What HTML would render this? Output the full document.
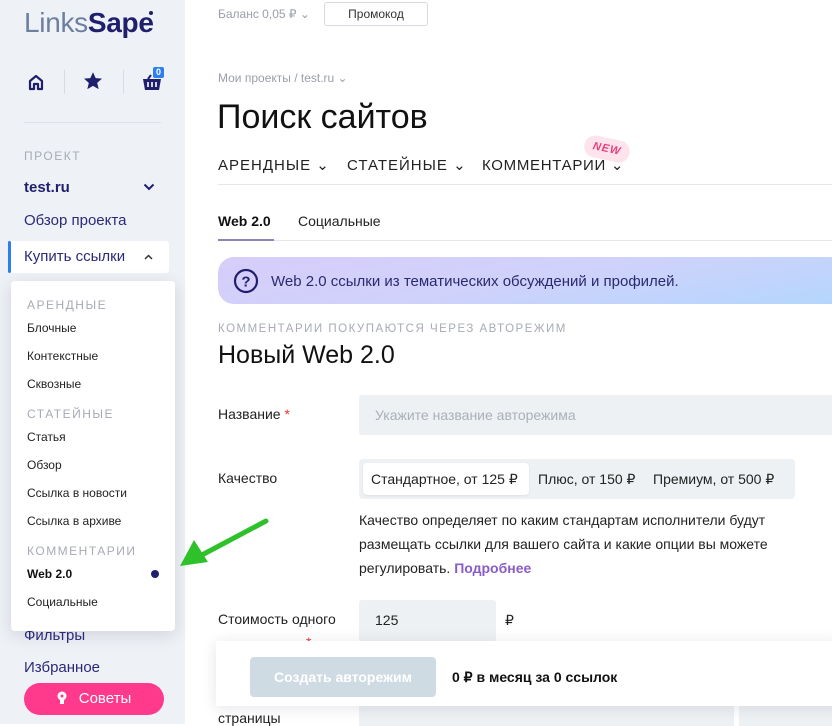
<!DOCTYPE html>
<html><head><meta charset="utf-8"><style>
*{box-sizing:border-box;margin:0;padding:0}
body{width:832px;height:724px;overflow:hidden;background:#fff;font-family:"Liberation Sans","Noto Sans CJK JP",sans-serif;position:relative;color:#111}
.a{position:absolute;white-space:nowrap}
#side{position:absolute;left:0;top:0;width:185px;height:724px;background:#eef1f5}
.nav{color:#2b2a7a;font-size:15px}
.cap{color:#a6abb5;font-size:12px;letter-spacing:1.5px}
.dd{position:absolute;left:11px;top:281px;width:164px;height:350px;background:#fff;border-radius:4px;box-shadow:0 4px 16px rgba(40,50,90,.15)}
.dd .cap{left:16px}
.dd .it{position:absolute;left:16px;font-size:12px;color:#222}
</style></head><body>
<div id="side">
 <div class="a" style="left:24px;top:7px;font-size:28px;letter-spacing:-.3px"><span style="color:#6d7fa0">Links</span><span style="color:#1f1f6e;font-weight:bold">Sape</span></div>
 <div class="a" style="left:149px;top:11px;width:4px;height:4px;border-radius:50%;background:#1f1f6e"></div>
 <svg class="a" style="left:27px;top:73px" width="18" height="18" viewBox="0 0 18 18"><path d="M3 16V8l6-5 6 5v8h-4v-5H7v5z" fill="none" stroke="#1f1f6e" stroke-width="2.2" stroke-linejoin="round"/></svg>
 <div class="a" style="left:64px;top:70px;width:1px;height:24px;background:#d7dce3"></div>
 <svg class="a" style="left:83px;top:71px" width="20" height="20" viewBox="0 0 24 24"><path d="M12 1.5l3.2 7 7.6.7-5.8 5 1.8 7.5L12 17.8 5.2 21.7 7 14.2l-5.8-5 7.6-.7z" fill="#1f1f6e"/></svg>
 <div class="a" style="left:123px;top:70px;width:1px;height:24px;background:#d7dce3"></div>
 <svg class="a" style="left:142px;top:74px" width="20" height="17" viewBox="0 0 20 17"><path d="M1 5h18l-2 11H3z" fill="#1f1f6e"/><path d="M6 8v5M10 8v5M14 8v5" stroke="#fff" stroke-width="1.6"/><path d="M6 5l3-4" stroke="#1f1f6e" stroke-width="2"/></svg>
 <div class="a" style="left:153px;top:67px;width:11px;height:11px;background:#2d7ff0;border-radius:2px;color:#fff;font-size:9px;font-weight:bold;text-align:center;line-height:11px">0</div>
 <div class="a" style="left:24px;top:122px;width:137px;height:1px;background:#dde1e7"></div>
 <div class="a cap" style="left:24px;top:149px">ПРОЕКТ</div>
 <div class="a" style="left:24px;top:179px;font-size:15px;font-weight:bold;color:#1f1f6e">test.ru</div>
 <svg class="a" style="left:143px;top:183px" width="12" height="8" viewBox="0 0 12 8"><path d="M1.5 1.5l4.5 4.5 4.5-4.5" fill="none" stroke="#1f1f6e" stroke-width="2"/></svg>
 <div class="a nav" style="left:24px;top:212px">Обзор проекта</div>
 <div class="a" style="left:8px;top:241px;width:161px;height:32px;background:#fff;border-radius:3px"></div>
 <div class="a" style="left:8px;top:241px;width:3px;height:32px;background:#2d7ff0;border-radius:2px"></div>
 <div class="a nav" style="left:24px;top:248px">Купить ссылки</div>
 <svg class="a" style="left:144px;top:254px" width="9" height="6" viewBox="0 0 9 6"><path d="M1 5l3.5-3.5L8 5" fill="none" stroke="#333" stroke-width="1.5"/></svg>
 <div class="a nav" style="left:24px;top:627px">Фильтры</div>
 <div class="a nav" style="left:24px;top:659px">Избранное</div>
 <div class="a" style="left:24px;top:683px;width:140px;height:32px;border-radius:16px;background:#ff3a8c;color:#fff;font-size:15px;text-align:center;line-height:32px">
  <svg style="vertical-align:-2px;margin-right:12px" width="10" height="14" viewBox="0 0 10 14"><circle cx="5" cy="5" r="4.5" fill="#fff"/><rect x="3" y="9" width="4" height="4" fill="#fff"/><circle cx="5" cy="5" r="1.5" fill="#ff3a8c"/></svg>Советы</div>
</div>
<div class="dd">
 <div class="a cap" style="top:17px">АРЕНДНЫЕ</div>
 <div class="it" style="top:40px">Блочные</div>
 <div class="it" style="top:68px">Контекстные</div>
 <div class="it" style="top:96px">Сквозные</div>
 <div class="a cap" style="top:126px">СТАТЕЙНЫЕ</div>
 <div class="it" style="top:149px">Статья</div>
 <div class="it" style="top:177px">Обзор</div>
 <div class="it" style="top:205px">Ссылка в новости</div>
 <div class="it" style="top:233px">Ссылка в архиве</div>
 <div class="a cap" style="top:263px">КОММЕНТАРИИ</div>
 <div class="it" style="top:286px;font-weight:bold;color:#111">Web 2.0</div>
 <div class="a" style="left:140px;top:289px;width:8px;height:8px;border-radius:50%;background:#1f1f6e"></div>
 <div class="it" style="top:314px">Социальные</div>
</div>
<svg class="a" style="left:178px;top:518px" width="92" height="52" viewBox="0 0 92 52"><path d="M88 3L22 38" stroke="#2fc12a" stroke-width="5" stroke-linecap="round"/><path d="M2 48L16 22 30 44z" fill="#2fc12a"/></svg>

<div class="a" style="left:218px;top:7px;font-size:12px;color:#9aa0a8">Баланс 0,05 ₽ ⌄</div>
<div class="a" style="left:324px;top:2px;width:104px;height:24px;border:1px solid #d6d9de;border-radius:3px;font-size:12px;color:#333;text-align:center;line-height:22px">Промокод</div>
<div class="a" style="left:218px;top:71px;font-size:12px;color:#9aa0a8">Мои проекты / test.ru ⌄</div>
<div class="a" style="left:217px;top:98px;font-size:34px;color:#111">Поиск сайтов</div>
<div class="a" style="left:218px;top:156px;font-size:15px;letter-spacing:1px;color:#222">АРЕНДНЫЕ ⌄</div>
<div class="a" style="left:347px;top:156px;font-size:15px;letter-spacing:1px;color:#222">СТАТЕЙНЫЕ ⌄</div>
<div class="a" style="left:482px;top:156px;font-size:15px;letter-spacing:.7px;color:#222">КОММЕНТАРИИ ⌄</div>
<div class="a" style="left:584px;top:138px;width:46px;height:22px;border-radius:11px;background:#fde3ec;transform:rotate(12deg);color:#ea3d7e;font-size:11px;font-weight:bold;font-style:italic;text-align:center;line-height:22px;letter-spacing:1px">NEW</div>
<div class="a" style="left:218px;top:184px;width:614px;height:1px;background:#e4e6ea"></div>
<div class="a" style="left:218px;top:213px;font-size:14px;font-weight:bold">Web 2.0</div>
<div class="a" style="left:298px;top:213px;font-size:14px;color:#222">Социальные</div>
<div class="a" style="left:218px;top:240px;width:614px;height:1px;background:#e4e6ea"></div>
<div class="a" style="left:218px;top:239px;width:56px;height:2px;background:#8a86b5"></div>
<div class="a" style="left:218px;top:257px;width:620px;height:47px;border-radius:16px 0 0 16px;background:linear-gradient(170deg,#d8cdfa 0%,#cfd2fb 50%,#b4d6fc 100%)"></div>
<svg class="a" style="left:233px;top:268px" width="26" height="26" viewBox="0 0 26 26"><circle cx="13" cy="13" r="11" fill="none" stroke="#1f1f6e" stroke-width="2.2"/><text x="13" y="18.5" text-anchor="middle" font-size="15" font-weight="bold" fill="#1f1f6e" font-family="Liberation Sans">?</text></svg>
<div class="a" style="left:271px;top:273px;font-size:15px;color:#2b2a6e">Web 2.0 ссылки из тематических обсуждений и профилей.</div>
<div class="a cap" style="left:218px;top:323px;font-size:11.5px">КОММЕНТАРИИ ПОКУПАЮТСЯ ЧЕРЕЗ АВТОРЕЖИМ</div>
<div class="a" style="left:218px;top:341px;font-size:25px">Новый Web 2.0</div>
<div class="a" style="left:218px;top:406px;font-size:14px;color:#222">Название <span style="color:#e33">*</span></div>
<div class="a" style="left:359px;top:395px;width:480px;height:40px;background:#eef1f3;border-radius:3px"></div>
<div class="a" style="left:375px;top:407px;font-size:14px;color:#aab0b8">Укажите название авторежима</div>
<div class="a" style="left:218px;top:470px;font-size:14px;color:#222">Качество</div>
<div class="a" style="left:359px;top:459px;width:436px;height:40px;background:#eef1f3;border-radius:4px"></div>
<div class="a" style="left:363px;top:463px;width:166px;height:32px;background:#fff;border-radius:4px;box-shadow:0 1px 2px rgba(0,0,0,.08)"></div>
<div class="a" style="left:371px;top:471px;font-size:14px;color:#222">Стандартное, от 125 ₽</div>
<div class="a" style="left:538px;top:471px;font-size:14px;color:#222">Плюс, от 150 ₽</div>
<div class="a" style="left:653px;top:471px;font-size:14px;color:#222">Премиум, от 500 ₽</div>
<div class="a" style="left:359px;top:508px;font-size:14px;line-height:24px;color:#222">Качество определяет по каким стандартам исполнители будут<br>размещать ссылки для вашего сайта и какие опции вы можете<br>регулировать. <span style="color:#8a5cc7;font-weight:bold">Подробнее</span></div>
<div class="a" style="left:218px;top:611px;font-size:14px;color:#222">Стоимость одного</div>
<div class="a" style="left:306px;top:634px;font-size:14px;color:#e33">*</div>
<div class="a" style="left:359px;top:600px;width:137px;height:42px;background:#eef1f3;border-radius:3px"></div>
<div class="a" style="left:375px;top:612px;font-size:14px;color:#222">125</div>
<div class="a" style="left:505px;top:612px;font-size:14px;color:#222">₽</div>
<div class="a" style="left:359px;top:706px;width:375px;height:20px;background:#eef1f3"></div>
<div class="a" style="left:739px;top:706px;width:100px;height:20px;background:#eef1f3"></div>
<div class="a" style="left:218px;top:710px;font-size:14px;color:#222">страницы</div>
<div class="a" style="left:216px;top:641px;width:630px;height:65px;background:#fff;box-shadow:0 2px 14px rgba(30,40,80,.12)"></div>
<div class="a" style="left:250px;top:657px;width:186px;height:40px;background:#cfdbe3;border-radius:4px;color:#fff;font-size:14px;font-weight:bold;text-align:center;line-height:40px">Создать авторежим</div>
<div class="a" style="left:452px;top:669px;font-size:14px;font-weight:bold;color:#111">0 ₽ в месяц за 0 ссылок</div>
</body></html>
